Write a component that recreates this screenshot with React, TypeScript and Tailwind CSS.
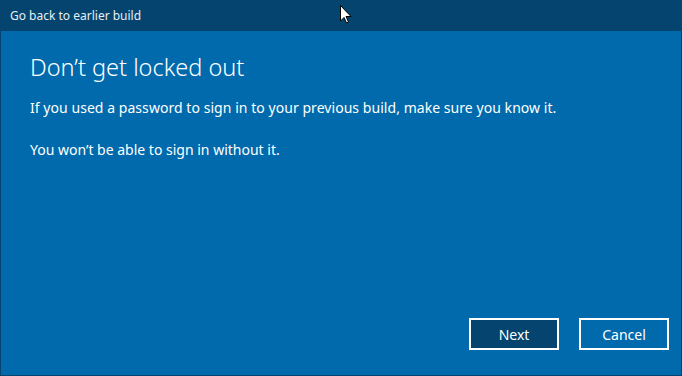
import React from 'react';

const Cursor = () => (
  <svg width="12" height="19" viewBox="0 0 12 19" className="absolute left-[340px] top-[5px]">
    <path d="M0.5 0.5 L0.5 16 L4 12.5 L6.5 18 L8.5 17 L6 11.5 L11 11.5 Z" fill="#fff" stroke="#000" strokeWidth="1" />
  </svg>
);

const App: React.FC = () => {
  return (
    <div className="relative w-[682px] h-[376px] flex flex-col bg-[#04446e] text-white font-['Segoe_UI','Noto_Sans',sans-serif]">
      {/* title bar */}
      <div className="h-[31px] shrink-0 flex items-center pl-[10px] text-[12px] text-[#e6eef4]">
        Go back to earlier build
      </div>

      {/* body */}
      <div className="flex-1 flex flex-col bg-[#006aad] mx-px mb-px">
        <div className="pl-[29px] pt-[20px]">
          <h1 className="text-[23.5px] font-light leading-[32px]">Don’t get locked out</h1>
          <p className="mt-[15px] text-[14px] leading-[20px] tracking-[0.05px]">
            If you used a password to sign in to your previous build, make sure you know it.
          </p>
          <p className="mt-[22px] text-[14px] leading-[20px]">You won’t be able to sign in without it.</p>
        </div>

        <div className="mt-auto flex justify-end gap-[20px] pr-[12px] pb-[25px]">
          <button className="w-[90px] h-[32px] border-2 border-white bg-[#04446e] text-[14px]">Next</button>
          <button className="w-[90px] h-[32px] border-2 border-white text-[14px]">Cancel</button>
        </div>
      </div>

      <Cursor />
    </div>
  );
};

export default App;
